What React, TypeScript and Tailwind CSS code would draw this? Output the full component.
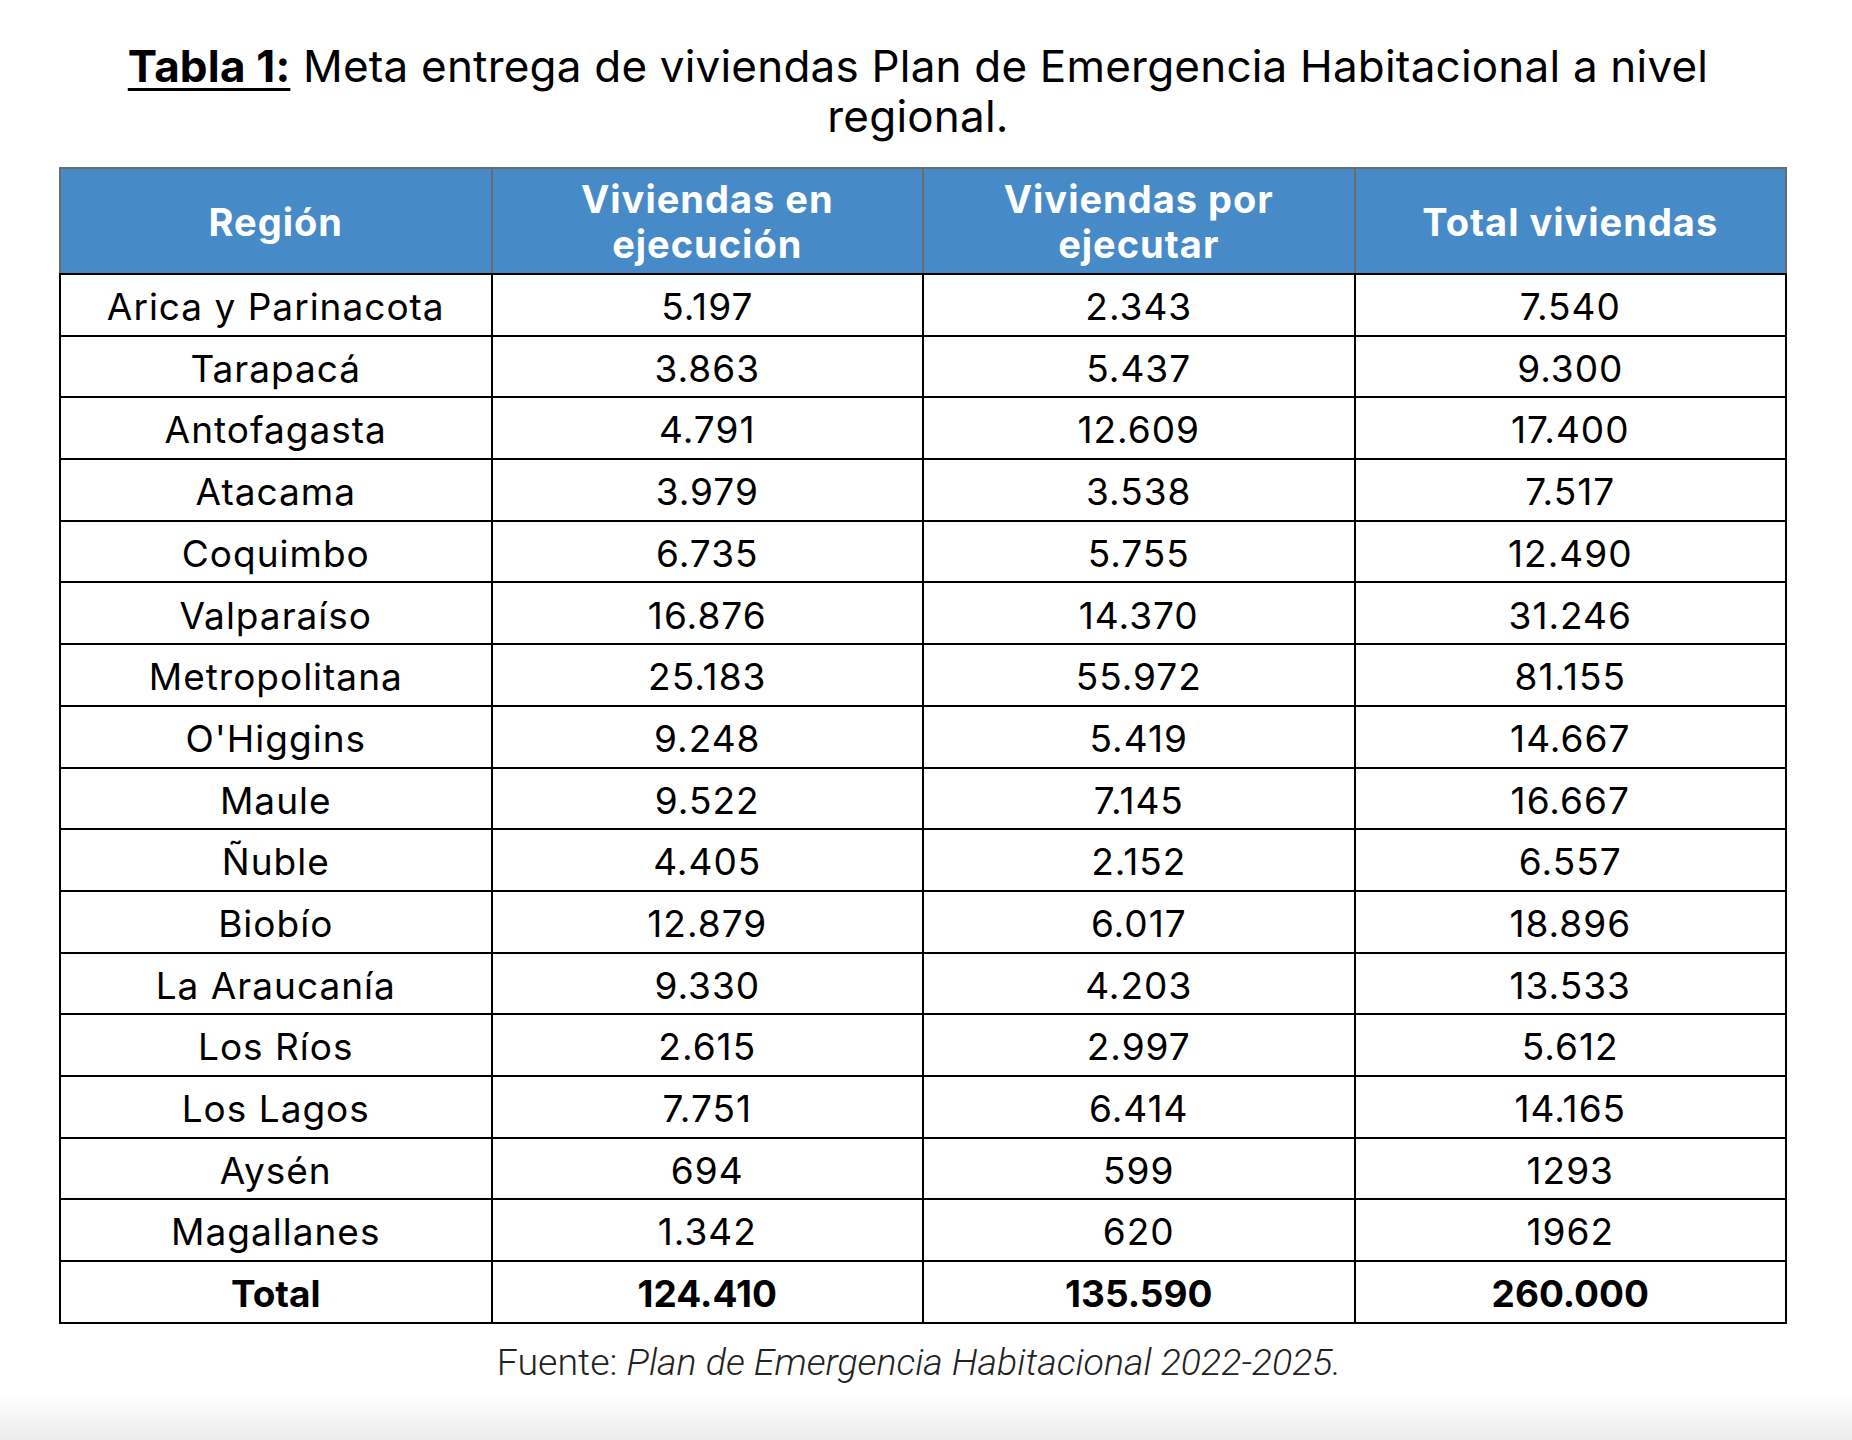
import React from "react";

type Row = { region: string; enEjecucion: string; porEjecutar: string; total: string };

const rows: Row[] = [
  { region: "Arica y Parinacota", enEjecucion: "5.197", porEjecutar: "2.343", total: "7.540" },
  { region: "Tarapacá", enEjecucion: "3.863", porEjecutar: "5.437", total: "9.300" },
  { region: "Antofagasta", enEjecucion: "4.791", porEjecutar: "12.609", total: "17.400" },
  { region: "Atacama", enEjecucion: "3.979", porEjecutar: "3.538", total: "7.517" },
  { region: "Coquimbo", enEjecucion: "6.735", porEjecutar: "5.755", total: "12.490" },
  { region: "Valparaíso", enEjecucion: "16.876", porEjecutar: "14.370", total: "31.246" },
  { region: "Metropolitana", enEjecucion: "25.183", porEjecutar: "55.972", total: "81.155" },
  { region: "O'Higgins", enEjecucion: "9.248", porEjecutar: "5.419", total: "14.667" },
  { region: "Maule", enEjecucion: "9.522", porEjecutar: "7.145", total: "16.667" },
  { region: "Ñuble", enEjecucion: "4.405", porEjecutar: "2.152", total: "6.557" },
  { region: "Biobío", enEjecucion: "12.879", porEjecutar: "6.017", total: "18.896" },
  { region: "La Araucanía", enEjecucion: "9.330", porEjecutar: "4.203", total: "13.533" },
  { region: "Los Ríos", enEjecucion: "2.615", porEjecutar: "2.997", total: "5.612" },
  { region: "Los Lagos", enEjecucion: "7.751", porEjecutar: "6.414", total: "14.165" },
  { region: "Aysén", enEjecucion: "694", porEjecutar: "599", total: "1293" },
  { region: "Magallanes", enEjecucion: "1.342", porEjecutar: "620", total: "1962" },
];

const headers = ["Región", "Viviendas en ejecución", "Viviendas por ejecutar", "Total viviendas"];

const cell = "h-[61.7px] border-2 border-black px-0 pt-[4px] pb-0 text-center align-middle";

export default function App() {
  return (
    <div className="flex h-[1440px] flex-col bg-white font-['Inter',sans-serif] text-black">
      <div className="pr-[16px]">
        <h1 className="mx-auto w-[1640px] pt-[41px] text-center text-[44px] font-normal leading-[50px] tracking-[0.2px]">
          <span className="font-bold underline decoration-[3px] underline-offset-[6px]">Tabla 1:</span> Meta entrega de
          viviendas Plan de Emergencia Habitacional a nivel regional.
        </h1>
      </div>

      <table className="ml-[59px] mt-[26px] w-[1728px] table-fixed border-collapse">
        <thead>
          <tr className="bg-[#468bc7]">
            {headers.map((h) => (
              <th
                key={h}
                className="h-[106px] border-2 border-b-black border-[#6b6b6b] px-12 pt-[2px] text-center align-middle text-[38px] font-bold leading-[45px] tracking-[1px] text-white"
              >
                {h}
              </th>
            ))}
          </tr>
        </thead>
        <tbody className="text-[37px] tracking-[1px]">
          {rows.map((r) => (
            <tr key={r.region}>
              <td className={cell}>{r.region}</td>
              <td className={cell}>{r.enEjecucion}</td>
              <td className={cell}>{r.porEjecutar}</td>
              <td className={cell}>{r.total}</td>
            </tr>
          ))}
          <tr className="font-bold tracking-normal">
            <td className={cell}>Total</td>
            <td className={cell}>124.410</td>
            <td className={cell}>135.590</td>
            <td className={cell}>260.000</td>
          </tr>
        </tbody>
      </table>

      <p className="mt-[16px] pr-[14px] text-center font-['Roboto',sans-serif] text-[37.5px] font-light leading-[44px] text-[#222]">
        Fuente: <span className="italic">Plan de Emergencia Habitacional 2022-2025.</span>
      </p>

      <div className="mt-[10px] flex-1 bg-gradient-to-b from-white to-[#ececec]" />
    </div>
  );
}
